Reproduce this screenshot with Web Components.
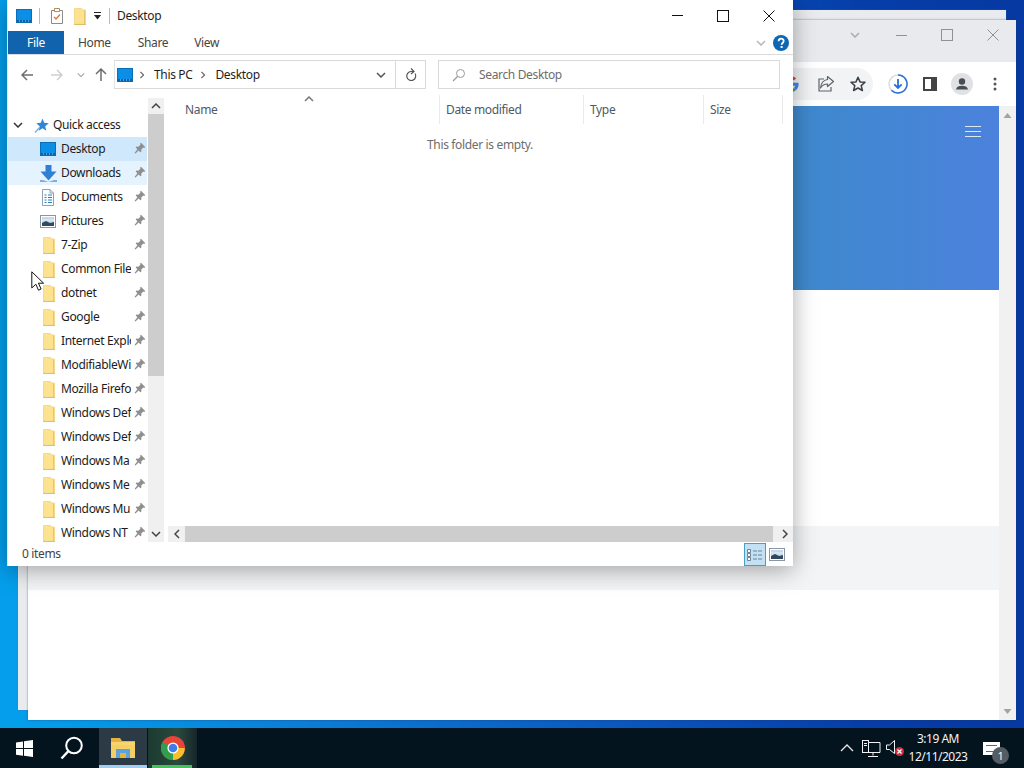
<!DOCTYPE html>
<html lang="en">
<head>
<meta charset="utf-8">
<title>Desktop</title>
<style>
html,body{margin:0;padding:0;background:#0a5cc0;overflow:hidden}
body{font:12px/16px "Noto Sans","Open Sans",sans-serif;letter-spacing:-.35px;color:#1e1e1e}
</style>
</head>
<body>
<x-desktop>
  <x-back-window slot="windows"></x-back-window>
  <x-browser slot="windows"></x-browser>
  <x-explorer slot="windows"></x-explorer>
  <x-cursor slot="windows"></x-cursor>
  <x-taskbar slot="taskbar"></x-taskbar>
</x-desktop>
<script>
const ICONS={
monitor:[16,14,'<rect x=".5" y=".5" width="15" height="13" fill="#0b8fe6" stroke="#0c6db4"/><rect x="1" y="11" width="14" height="2" fill="#0a63ab"/><path d="M3 12h1M6 12h1M9 12h1M12 12h1" stroke="#9fd2f5"/>'],
folder:[14,18,'<path d="M1.5 1.5h7l1 1.5h3v14h-11z" fill="#fde38f" stroke="#f4d98a"/><path d="M11.5 3.5v13.5" stroke="#e6c56e"/><path d="M1 17.5h12" stroke="#e0bf68"/>'],
download:[17,17,'<path d="M5.5 0h6v6.5h5L8.5 15.5.5 6.5h5z" fill="#2e80d6"/><path d="M0 15.5h3l5.5 1 5.5-1h3v1H0z" fill="#1f67b5"/>'],
doc:[12,17,'<path d="M.5.5h7.5l3.5 3.5v12.500H.5z" fill="#fbfdff" stroke="#8ea0b2"/><path d="M8 .5V4h3.500" fill="none" stroke="#8ea0b2"/><path d="M2.500 6h2M6 6h4M2.500 8.500h2M6 8.500h4M2.500 11h2M6 11h4M2.500 13.500h2M6 13.500h4" stroke="#2b7fbc"/>'],
picture:[16,13,'<rect x=".5" y=".5" width="15" height="12" fill="#fff" stroke="#8a97a3"/><rect x="2" y="2" width="12" height="9" fill="#c4d9ea"/><path d="M2 8l4-2 4 2 4-1v4H2z" fill="#31485f"/><path d="M2 5h12" stroke="#e9f2f8"/>'],
pin:[12,12,'<path d="M7 .8l4.200 4.200-1 .9-.9-.3-2 2 .1 1.900-1 .8-1.800-1.800L1.500 11.500.5 11l2.900-3.700-1.700-1.700.8-1 1.900.1 2-2-.3-.9z" fill="#8f8f8f"/>'],
star:[15,15,'<path d="M8.500.5l1.700 4.300 4.500.4-3.500 3 1.100 4.500-3.800-2.400-3.900 2.400 1.100-4.500-3.400-3 4.500-.4z" fill="#2f85d8"/><path d="M5.500 9.500L1 14.500" stroke="#7db7e6" stroke-width="1.500"/>'],
chevd:[10,6,'<path d="M1 1l4 4 4-4" fill="none" stroke="currentColor" stroke-width="1.500"/>'],
chevu:[10,6,'<path d="M1 5l4-4 4 4" fill="none" stroke="currentColor" stroke-width="1.500"/>'],
chevr:[6,10,'<path d="M1 1l4 4-4 4" fill="none" stroke="currentColor" stroke-width="1.500"/>'],
chevl:[6,10,'<path d="M5 1L1 5l4 4" fill="none" stroke="currentColor" stroke-width="1.500"/>'],
arrowl:[12,12,'<path d="M6 1L1 6l5 5M1 6h11" fill="none" stroke="currentColor" stroke-width="1.500"/>'],
arrowr:[12,12,'<path d="M6 1l5 5-5 5M11 6H0" fill="none" stroke="currentColor" stroke-width="1.500"/>'],
arrowu:[12,13,'<path d="M1 6l5-5 5 5M6 1v12" fill="none" stroke="currentColor" stroke-width="1.500"/>'],
refresh:[12,14,'<path d="M10 5.500A4.500 4.500 0 1 1 6 3.500H8" fill="none" stroke="currentColor" stroke-width="1.200"/><path d="M6 .5l3 3-3 2.500" fill="none" stroke="currentColor" stroke-width="1.200"/>'],
search:[14,14,'<circle cx="8.500" cy="5.500" r="4" fill="none" stroke="currentColor"/><path d="M5.500 8.500L1 13" stroke="currentColor" stroke-width="1.300"/>'],
task:[12,16,'<path d="M.5 2.500h11v13H.5z" fill="#fff" stroke="#8b8b8b"/><path d="M3.500.5h5v3h-5z" fill="#fff" stroke="#b08d5a"/><path d="M3 9l2 2 4-4.500" fill="none" stroke="#d9783a" stroke-width="1.300"/>'],
qat:[9,8,'<path d="M1 .5h7" stroke="#222"/><path d="M1 3h7L4.500 7.500z" fill="#222"/>'],
min:[11,1,'<rect width="11" height="1" fill="currentColor"/>'],
max:[12,12,'<rect x=".5" y=".5" width="11" height="11" fill="none" stroke="currentColor"/>'],
close:[12,12,'<path d="M.5.5l11 11M11.500.5l-11 11" stroke="currentColor" fill="none"/>'],
help:[16,16,'<circle cx="8" cy="8" r="8" fill="#0d67b3"/><path d="M5.600 6.200c0-3.300 5.100-3.300 5.100-.2 0 2-2.100 1.900-2.100 3.800" fill="none" stroke="#fff" stroke-width="1.800"/><rect x="7.600" y="11" width="2" height="2" fill="#fff"/>'],
details:[16,13,'<path d="M.5 1.500h3v3h-3zM.5 5.500h3v3h-3zM.5 9.500h3v3h-3z" fill="#fff" stroke="#6d8391"/><path d="M6 3h10M6 7h10M6 11h10" stroke="#6d8391" stroke-dasharray="4 1"/>'],
g:[16,16,'<path d="M15.600 8.200c0-.6 0-1-.2-1.500H8v3h4.300c-.2 1-.8 1.800-1.600 2.400l2.400 1.900c1.500-1.300 2.500-3.300 2.500-5.800z" fill="#4285f4"/><path d="M8 16c2.100 0 3.900-.7 5.100-1.900l-2.400-1.900c-.7.400-1.600.7-2.700.7-2.100 0-3.800-1.400-4.400-3.300L1 11.500C2.300 14.200 5 16 8 16z" fill="#34a853"/><path d="M3.600 9.600a4.800 4.800 0 0 1 0-3.100L1 4.500a8 8 0 0 0 0 7.100z" fill="#fbbc05"/><path d="M8 3.200c1.200 0 2.200.4 3 1.200l2.200-2.200A8 8 0 0 0 1 4.500l2.600 2c.6-1.900 2.300-3.300 4.400-3.300z" fill="#ea4335"/>'],
share:[18,18,'<path d="M7 4H2v12h12v-4" fill="none" stroke="#5f6368" stroke-width="1.200"/><path d="M10.500 1.500L16.500 6.500l-6 5V9C7 9 5 10.500 3.500 13 4 8.500 6.500 5 10.500 4.500z" fill="#f1f3f4" stroke="#5f6368" stroke-width="1.200" stroke-linejoin="round"/>'],
bstar:[16,16,'<path d="M8 1.300l2 4.600 5 .4-3.800 3.300 1.200 4.900L8 12l-4.400 2.500 1.200-4.900L1 6.300l5-.4z" fill="none" stroke="#3c4043" stroke-width="1.500" stroke-linejoin="round"/>'],
bdown:[20,20,'<circle cx="10" cy="10" r="9" fill="none" stroke="#d8dce2" stroke-width="1.500"/><path d="M10 1a9 9 0 1 1-6.500 15.200" fill="none" stroke="#2a6fd6" stroke-width="1.500"/><path d="M10 5v9M6.300 10.300L10 14l3.700-3.700" fill="none" stroke="#2a6fd6" stroke-width="1.800"/>'],
side:[14,14,'<rect x="1" y="1" width="12" height="12" fill="#fff" stroke="#444" stroke-width="2"/><rect x="8" y="1" width="5" height="12" fill="#444"/>'],
dots:[4,14,'<circle cx="2" cy="2" r="1.500" fill="#555"/><circle cx="2" cy="7" r="1.500" fill="#555"/><circle cx="2" cy="12" r="1.500" fill="#555"/>'],
profile:[22,22,'<circle cx="11" cy="11" r="11" fill="#dfe1e5"/><circle cx="11" cy="8.500" r="3.200" fill="#4a4d52"/><path d="M5 16.500c.5-2.700 3-3.700 6-3.700s5.500 1 6 3.700z" fill="#4a4d52"/>'],
burger:[16,11,'<path d="M0 .5h16M0 5.500h16M0 10.500h16" stroke="#dbe9f7"/>'],
tri:[9,5,'<path d="M.5 5L4.500 0l4 5z" fill="currentColor"/>'],
trid:[9,5,'<path d="M.5 0l4 5 4-5z" fill="currentColor"/>'],
win:[17,17,'<path d="M0 2.400L7 1.400v6.700H0zM8 1.200L17 0v8.100H8zM0 9h7v6.700l-7-1zM8 9h9v8l-9-1.200z" fill="#fff"/>'],
magn:[24,24,'<circle cx="14" cy="9.500" r="7.800" fill="none" stroke="#fff" stroke-width="2"/><path d="M8.500 15L1.500 22.500" stroke="#fff" stroke-width="2.500"/>'],
tbfolder:[24,22,'<path d="M0 1h9l2 3h13v4H0z" fill="#e7b23f"/><path d="M0 5h24v16H0z" fill="#f7d56e"/><path d="M0 8h24v13H0z" fill="#f6cf63"/><path d="M5 12h14v9H5z" fill="#5ba3dc"/><path d="M9 16h6v5H9z" fill="#e7b23f"/>'],
chrome:[24,24,'<circle cx="12" cy="12" r="12" fill="#e8443a"/><path d="M12 12L1.600 6A12 12 0 0 0 12 24l5.200-9z" fill="#2f9e4f"/><path d="M12 12h11.800A12 12 0 0 1 12 24z" fill="#f6c02d"/><circle cx="12" cy="12" r="5.600" fill="#fff"/><circle cx="12" cy="12" r="4.300" fill="#3b7ee8"/>'],
up:[14,8,'<path d="M1 7l6-6 6 6" fill="none" stroke="#e8e8e8" stroke-width="1.300"/>'],
net:[20,19,'<path d="M6 3.500h13v10H6M12 13.500v3M7 17.500h10" fill="none" stroke="#f2f2f2"/><rect x="1.500" y="1.500" width="6" height="12" fill="#06151f" stroke="#f2f2f2"/><path d="M3 4.500h3M3 6.500h3" stroke="#f2f2f2"/>'],
vol:[18,18,'<path d="M.5 6h3L8.500 1.500v13L3.500 10.500h-3z" fill="none" stroke="#f2f2f2"/><circle cx="13.500" cy="12.500" r="4.500" fill="#c9303e"/><path d="M11.500 10.500l4 4M15.500 10.500l-4 4" stroke="#fff" stroke-width="1.200"/>'],
cursor:[13,20,'<path d="M.8.8v16.200l4-3.800 2.700 6 2.600-1.200-2.700-5.800h5.200z" fill="#fff" stroke="#111" stroke-linejoin="round"/>']
};
function def(name,css,html,init){
  customElements.define(name,class extends HTMLElement{
    constructor(){super();const r=this.attachShadow({mode:'open'});r.innerHTML='<style>'+css+'</style>'+html;}
    connectedCallback(){if(init)init.call(this,this.shadowRoot);}
  });
}
class XIcon extends HTMLElement{
  constructor(){super();this.attachShadow({mode:'open'});}
  connectedCallback(){
    const [w,h,b]=ICONS[this.getAttribute('name')];
    this.shadowRoot.innerHTML='<style>:host{display:inline-flex;flex:none;align-items:center;justify-content:center}svg{display:block}</style><svg width="'+w+'" height="'+h+'" viewBox="0 0 '+w+' '+h+'">'+b+'</svg>';
  }
}
customElements.define('x-icon',XIcon);

def('x-desktop',`
:host{display:flex;flex-direction:column;width:1024px;height:768px;overflow:hidden}
.area{flex:1;position:relative;background:linear-gradient(90deg,#049fec 0,#049be8 6%,#0a7dd8 30%,#0a58c0 60%,#063da8 85%,#0639a2 100%)}
`,`<div class="area"><slot name="windows"></slot></div><slot name="taskbar"></slot>`);

def('x-cursor',`:host{position:absolute;left:31px;top:271px;display:block;line-height:0}`,`<x-icon name="cursor"></x-icon>`);

def('x-back-window',`:host{position:absolute;left:18px;top:10px;width:988px;height:700px;display:block;background:#e9ebee;box-shadow:0 0 1px #4a6fa0}`,``);

def('x-browser',`
:host{position:absolute;left:28px;top:20px;width:988px;height:700px;display:flex;flex-direction:column;background:#fff;box-shadow:0 0 2px rgba(40,60,90,.6)}
.title{height:42px;background:#e8eaed;display:flex;align-items:flex-start;justify-content:flex-end;color:#8f9194;flex:none}
.title x-icon{width:46px;height:30px}
.toolbar{height:44px;flex:none;background:#fff;display:flex;align-items:center;padding-right:6px;box-shadow:0 1px 0 #dadce0}
.pill{flex:1;height:32px;margin-left:300px;margin-right:9px;background:#f1f3f4;border-radius:16px;display:flex;align-items:center;justify-content:flex-end;gap:15px;padding-right:7px}
.pill x-icon:first-child{margin-right:3px}
.btn{width:32px;height:32px;display:flex;align-items:center;justify-content:center}
.btn.last{margin-right:-1px;padding-left:1px}
.page{flex:1;display:flex;min-height:0}
.content{flex:1;display:flex;flex-direction:column}
.hero{height:184px;flex:none;background:linear-gradient(90deg,#3d8acb 0,#3d8acb 76%,#4b82dc 100%);display:flex;justify-content:flex-end;align-items:flex-start;padding:20px 18px 0 0;box-sizing:border-box}
.band{margin-top:236px;height:64px;background:#f3f4f5}
.scroll{width:17px;flex:none;background:#f1f1f1;display:flex;flex-direction:column;justify-content:space-between;align-items:center;padding:7px 0 6px;box-sizing:border-box;color:#a3a3a3}
`,`
<div class="title"><x-icon name="chevd" style="color:#a9abae"></x-icon><x-icon name="min"></x-icon><x-icon name="max"></x-icon><x-icon name="close"></x-icon></div>
<div class="toolbar">
  <div class="pill"><x-icon name="g"></x-icon><x-icon name="share"></x-icon><x-icon name="bstar"></x-icon></div>
  <div class="btn"><x-icon name="bdown"></x-icon></div>
  <div class="btn"><x-icon name="side"></x-icon></div>
  <div class="btn"><x-icon name="profile"></x-icon></div>
  <div class="btn last"><x-icon name="dots"></x-icon></div>
</div>
<div class="page">
  <div class="content"><div class="hero"><x-icon name="burger"></x-icon></div><div class="band"></div></div>
  <div class="scroll"><x-icon name="tri"></x-icon><x-icon name="trid"></x-icon></div>
</div>`);

def('x-tree-row',`
:host{display:flex;align-items:center;height:24px;flex:none;box-sizing:border-box;padding-left:32px;color:#1c1c1c}
:host([sel]){background:#cfe8fb}
:host([hot]){background:#e5f3ff}
:host([head]){padding-left:4px}
.ic{width:16px;display:flex;justify-content:center;flex:none}
x-icon[name=folder]{margin-left:2px}
.tx{width:70px;margin-left:5px;overflow:hidden;white-space:nowrap;flex:none}
:host([head]) .tx{width:auto;margin-left:4px}
x-icon.p{margin:2px 0 0 3px;width:12px}
.arrow{display:none;width:12px;margin-right:9px;color:#333}
:host([head]) .arrow{display:flex;justify-content:center}
`,`<span class="arrow"><x-icon name="chevd"></x-icon></span><span class="ic" id="i"></span><span class="tx"><slot></slot></span><span id="p"></span>`,
function(r){
  if(r.getElementById('i').firstChild)return;
  r.getElementById('i').innerHTML='<x-icon name="'+(this.getAttribute('icon')||'folder')+'"></x-icon>';
  if(!this.hasAttribute('head'))r.getElementById('p').innerHTML='<x-icon class="p" name="pin"></x-icon>';
});

def('x-explorer',`
:host{position:absolute;left:7px;top:0;width:786px;height:566px;display:flex;flex-direction:column;background:#fff;box-sizing:border-box;border-left:1px solid #d4ebf8;box-shadow:0 4px 22px rgba(0,0,0,.34);color:#1e1e1e}
.titlebar{height:31px;flex:none;display:flex;align-items:center;padding-left:8px}
.titlebar .sep{width:1px;height:16px;background:#b9b9b9}
.wc{margin-left:auto;display:flex;color:#111;padding-right:1px}
.wc x-icon{width:46px;height:31px}
.tabs{height:23px;flex:none;display:flex;align-items:stretch;border-bottom:1px solid #dadbdc;color:#444}
.file{width:56px;background:#1263ad;color:#fff;display:flex;align-items:center;justify-content:center}
.tab{display:flex;align-items:center;margin-left:13px;padding:0 14px 0 0}
.file + .tab{margin-left:14px}
.tab.v{margin-left:12px}
.tabs .end{margin-left:auto;display:flex;align-items:center;gap:7px;padding-right:4px;color:#b7b7b7}
.nav{height:40px;flex:none;display:flex;align-items:flex-start;padding-top:5px;box-sizing:border-box}
.navbtns{width:106px;height:29px;display:flex;align-items:center;padding-left:13px;box-sizing:border-box;flex:none}
.addr{width:312px;height:29px;box-sizing:border-box;border:1px solid #d9d9d9;border-left-color:#e3e3e3;display:flex;align-items:center;flex:none}
.addr .mon{margin-left:2px}
.addr .dd{margin-left:auto;width:28px;color:#555}
.addr .rf{width:29px;height:27px;border-left:1px solid #d9d9d9;color:#555}
.search{margin-left:12px;width:342px;height:29px;box-sizing:border-box;border:1px solid #d9d9d9;display:flex;align-items:center;color:#6d6d6d;flex:none}
.main{flex:1;min-height:0;display:flex}
.tree{width:139px;flex:none;overflow:hidden;padding-top:18px;box-sizing:border-box;display:flex;flex-direction:column}
.vscroll{width:16px;flex:none;margin:3px 0 0 1px;background:#f0f0f0;display:flex;flex-direction:column;color:#444}
.vscroll .b{height:16px;flex:none;display:flex;align-items:center;justify-content:center}
.vscroll .th{height:262px;background:#cdcdcd;flex:none}
.vscroll .sp{flex:1}
.list{flex:1;min-width:0;display:flex;flex-direction:column;margin-left:1px}
.head{height:29px;flex:none;display:grid;grid-template-columns:274px 144px 120px 80px;color:#4d5a66}
.head div{border-left:1px solid #eaeaea;padding-left:6px;display:flex;align-items:center;position:relative}
.head div:first-child{border-left:0;padding-left:20px}
.head div:last-child{border-right:1px solid #eaeaea}
.sort{position:absolute;left:139px;top:1px;color:#777}
.empty{flex:1;text-align:center;padding:13px 0 0 2px;color:#6d6d6d}
.hscroll{height:16px;flex:none;margin:0 0 0 3px;background:#f0f0f0;display:flex;color:#444}
.hscroll .b{width:17px;flex:none;display:flex;align-items:center;justify-content:center}
.hscroll .th{width:588px;background:#cdcdcd;flex:none}
.hscroll .sp{flex:1}
.status{height:24px;flex:none;display:flex;align-items:center;padding-left:14px;color:#444}
.views{margin-left:auto;display:flex;align-items:center;padding-right:8px;gap:3px;align-self:stretch}
.v1{width:22px;height:23px;box-sizing:border-box;background:#c3e1f5;border:1px solid #4a9cc9;display:flex;align-items:center;justify-content:center}
`,`
<div class="titlebar">
  <x-icon name="monitor"></x-icon><span class="sep" style="margin:0 11px 0 7px"></span>
  <x-icon name="task"></x-icon><x-icon name="folder" style="margin-left:10px"></x-icon>
  <x-icon name="qat" style="margin:0 7px 0 6px"></x-icon><span class="sep" style="margin-right:7px"></span>
  <span>Desktop</span>
  <div class="wc"><x-icon name="min"></x-icon><x-icon name="max"></x-icon><x-icon name="close"></x-icon></div>
</div>
<div class="tabs">
  <div class="file">File</div>
  <div class="tab">Home</div><div class="tab">Share</div><div class="tab v">View</div>
  <div class="end"><x-icon name="chevd"></x-icon><x-icon name="help"></x-icon></div>
</div>
<div class="nav">
  <div class="navbtns">
    <x-icon name="arrowl" style="color:#6e6e6e"></x-icon>
    <x-icon name="arrowr" style="color:#cfcfcf;margin-left:18px"></x-icon>
    <x-icon name="chevd" style="color:#aaa;margin-left:13px;transform:scale(.8)"></x-icon>
    <x-icon name="arrowu" style="color:#6e6e6e;margin-left:9px"></x-icon>
  </div>
  <div class="addr">
    <x-icon class="mon" name="monitor"></x-icon>
    <x-icon name="chevr" style="color:#666;margin:0 9px 0 6px;transform:scale(.8)"></x-icon>
    <span>This PC</span>
    <x-icon name="chevr" style="color:#666;margin:0 9px 0 8px;transform:scale(.8)"></x-icon>
    <span>Desktop</span>
    <x-icon class="dd" name="chevd"></x-icon>
    <x-icon class="rf" name="refresh"></x-icon>
  </div>
  <div class="search"><x-icon name="search" style="color:#9a9a9a;margin:0 13px 0 13px"></x-icon><span>Search Desktop</span></div>
</div>
<div class="main">
  <div class="tree">
    <x-tree-row head icon="star">Quick access</x-tree-row>
    <x-tree-row sel icon="monitor">Desktop</x-tree-row>
    <x-tree-row hot icon="download">Downloads</x-tree-row>
    <x-tree-row icon="doc">Documents</x-tree-row>
    <x-tree-row icon="picture">Pictures</x-tree-row>
    <x-tree-row>7-Zip</x-tree-row>
    <x-tree-row>Common File</x-tree-row>
    <x-tree-row>dotnet</x-tree-row>
    <x-tree-row>Google</x-tree-row>
    <x-tree-row>Internet Explo</x-tree-row>
    <x-tree-row>ModifiableWi</x-tree-row>
    <x-tree-row>Mozilla Firefo</x-tree-row>
    <x-tree-row>Windows Def</x-tree-row>
    <x-tree-row>Windows Def</x-tree-row>
    <x-tree-row>Windows Ma</x-tree-row>
    <x-tree-row>Windows Me</x-tree-row>
    <x-tree-row>Windows Mu</x-tree-row>
    <x-tree-row>Windows NT</x-tree-row>
  </div>
  <div class="vscroll">
    <div class="b"><x-icon name="chevu"></x-icon></div><div class="th"></div><div class="sp"></div><div class="b"><x-icon name="chevd"></x-icon></div>
  </div>
  <div class="list">
    <div class="head">
      <div>Name<x-icon class="sort" name="chevu"></x-icon></div><div>Date modified</div><div>Type</div><div>Size</div>
    </div>
    <div class="empty">This folder is empty.</div>
    <div class="hscroll">
      <div class="b"><x-icon name="chevl"></x-icon></div><div class="th"></div><div class="sp"></div><div class="b"><x-icon name="chevr"></x-icon></div>
    </div>
  </div>
</div>
<div class="status"><span>0 items</span>
  <div class="views"><div class="v1"><x-icon name="details"></x-icon></div><x-icon name="picture"></x-icon></div>
</div>`);

def('x-taskbar',`
:host{display:flex;height:40px;flex:none;background:#04141f;color:#fff;align-items:stretch}
.t{display:flex;align-items:center;justify-content:center;flex:none}
.win{width:48px}.find{width:48px}
.exp{width:48px;margin-left:3px;background:#2b3a44;box-shadow:inset 0 -3px 0 #a0cdf0}
.chr{width:49px;margin-left:1px;background:linear-gradient(90deg,#1c3a30,#2a4a3e 60%,#16262a);position:relative}
.chr::after{content:"";position:absolute;left:4px;right:5px;bottom:0;height:3px;background:#48c05c}
.tray{margin-left:auto;display:flex;align-items:center}
.clock{width:66px;text-align:center;line-height:18px;color:#f2f2f2;margin-left:-2px;letter-spacing:-.5px}
.note{width:34px;height:40px;position:relative;margin-left:4px;margin-right:15px}
.bub{position:absolute;left:8px;top:14px;width:17px;height:13px;background:#fff}
.bub::before{content:"";position:absolute;left:3px;right:3px;top:3px;height:5px;border-top:1px solid #666;border-bottom:1px solid #666}
.bad{position:absolute;left:17px;top:19px;width:17px;height:17px;border-radius:50%;background:#555c62;color:#fff;display:flex;align-items:center;justify-content:center;font-size:11px;line-height:1}
`,`
<div class="t win"><x-icon name="win"></x-icon></div>
<div class="t find"><x-icon name="magn"></x-icon></div>
<div class="t exp"><x-icon name="tbfolder"></x-icon></div>
<div class="t chr"><x-icon name="chrome"></x-icon></div>
<div class="tray">
  <x-icon name="up" style="width:24px"></x-icon>
  <x-icon name="net" style="width:24px"></x-icon>
  <x-icon name="vol" style="width:24px"></x-icon>
  <div class="clock">3:19 AM<br>12/11/2023</div>
  <div class="note"><div class="bub"></div><div class="bad">1</div></div>
</div>`);
</script>
</body>
</html>
